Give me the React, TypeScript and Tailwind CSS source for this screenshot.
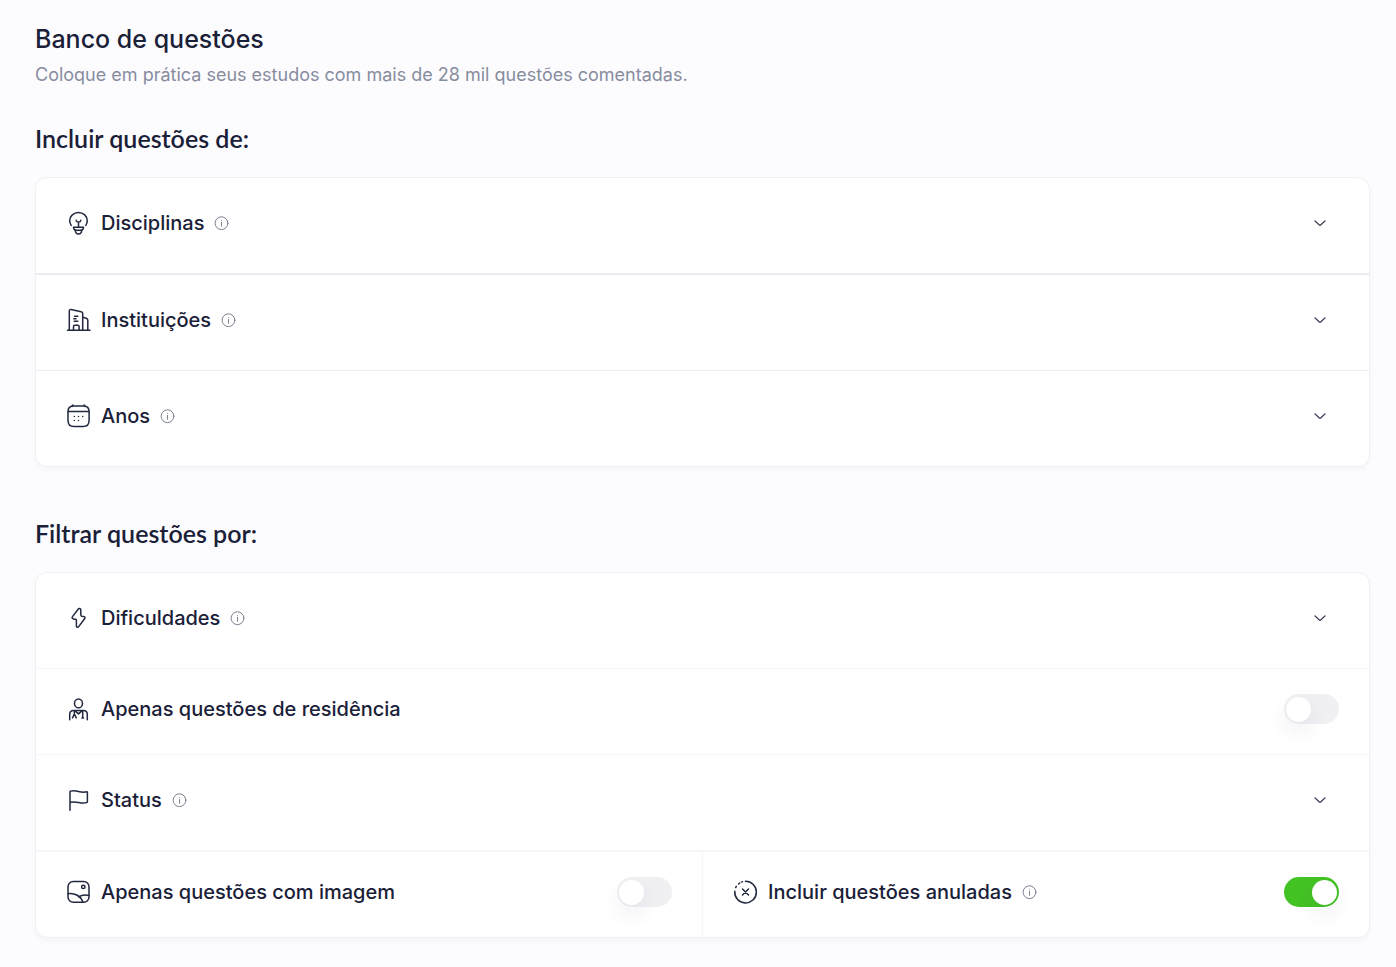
import React, { ReactNode, useState } from "react";
import clsx from "clsx";

const Icon = ({ children }: { children: ReactNode }) => (
  <svg
    viewBox="0 0 25 25"
    className="size-[25px] shrink-0 text-[#22283f]"
    fill="none"
    stroke="currentColor"
    strokeWidth={1.5}
    strokeLinecap="round"
    strokeLinejoin="round"
    aria-hidden="true"
  >
    {children}
  </svg>
);

const BulbIcon = () => (
  <Icon>
    <path d="M5.2 14.4A8.9 8.9 0 0 1 3.7 9.700a8.800 8.200 0 0 1 17.600 0 8.900 8.900 0 0 1-1.500 4.700" />
    <path d="M10.200 9.300c.2 1.200 1.100 1.800 2.300 1.800s2.100-.6 2.300-1.800M12.500 11.200v4.800" />
    <path d="M7.500 16.300h10c-.2 1.900-1.100 2.900-2.700 2.900h-4.600c-1.600 0-2.500-1-2.700-2.900Z" />
    <path d="M9.300 19.200c.1 2.400 1.300 3.700 3.200 3.700s3.100-1.300 3.200-3.700" />
  </Icon>
);

const BuildingIcon = () => (
  <Icon>
    <path d="M1.500 22.300h22.500M3.300 22.100V3c0-1.100.7-1.700 1.800-1.500l10 2.300c1 .2 1.600.8 1.600 1.800v16.500" />
    <path d="M16.700 9.200l3.500 1c1.100.3 1.600.9 1.600 2v9.900" />
    <path d="M7.500 22.100v-3.500c0-.9.500-1.400 1.400-1.400h2.800c.9 0 1.400.5 1.400 1.400v3.500" />
    <path d="M8.600 8.200h3.200M8.200 13.200h3.600M7.800 10.700h2.200" />
  </Icon>
);

const CalendarIcon = () => (
  <Icon>
    <path d="M7.600 2.100h9.800c3.700 0 5.700 2 5.700 5.700v8.600c0 4-2 6-6 6H8c-4 0-6-2-6-6V7.800c0-3.700 1.900-5.700 5.600-5.700Z" />
    <path d="M2.200 7.500h20.600M6.900 1c-.7.200-.9.700-.9 1.500M18.100 1c.7.200.9.700.9 1.500" />
    <path d="M8.300 12.600h.01M12.500 12.600h.01M16.700 12.600h.01M8.300 16.600h.01M12.500 16.600h.01" />
  </Icon>
);

const BoltIcon = () => (
  <Icon>
    <path d="M12.100 3.200 6.500 10.600c-.8 1.100-.4 2.100.9 2.300l2.100.3c.6.100.9.500.9 1.100v5.600c0 1.400 1.500 1.800 2.300.7l5.900-7.900c.8-1.100.4-2-.9-2.200l-1.900-.2c-.7-.1-1-.5-1-1.200V3.800c0-1.300-1.800-1.800-2.700-.6Z" />
  </Icon>
);

const DoctorIcon = () => (
  <Icon>
    <ellipse cx="12.500" cy="6.400" rx="4" ry="4.400" />
    <path d="M3.700 22.800v-5.500c0-2.600 1.300-3.900 3.900-3.900h9.800c2.600 0 3.900 1.300 3.900 3.900v5.500" />
    <path d="M8.400 13.700v3.300M6.500 20.900l1.900-3.900 1.900 3.900M9.200 13.900l3.300 3 3.300-3M16.700 13.700v6.600M15.900 20.900h1.600" />
  </Icon>
);

const FlagIcon = () => (
  <Icon>
    <path d="M4 22.300V4c0-.5.200-.8.700-.9 5.800-1.800 8.700 1.900 14.300 1 .7-.1 1.300-.3 1.600-.4.500-.1.800.2.800.7v9c0 .6-.2 1-.8 1.200-5.800 1.900-10-2.100-16.500-.3" />
  </Icon>
);

const ImageIcon = () => (
  <Icon>
    <rect x="2" y="1.500" width="21" height="20.800" rx="5.300" />
    <circle cx="17.300" cy="6.900" r="1.700" />
    <path d="M2.200 13.700c6.300-.8 12.800 2.200 14.600 8.300M12.600 16.900c3-1.900 6.600-2.400 10.200-1.500" />
  </Icon>
);

const CancelIcon = () => (
  <Icon>
    <path d="M12.500 1.300a10.800 10.800 0 1 1-10.700 9.900" />
    <path d="M2.700 7.500l.6-1.200M5.500 4l1.300-1M8.900 1.900l.6-.2M9.500 9l6 6M15.500 9l-6 6" />
  </Icon>
);

const InfoIcon = () => (
  <svg
    viewBox="0 0 15 15"
    className="size-[15px] shrink-0 text-[#6d7284]"
    fill="none"
    stroke="currentColor"
    strokeWidth={0.9}
    strokeLinecap="round"
    aria-hidden="true"
  >
    <circle cx="7.500" cy="7.200" r="6.400" />
    <path d="M7.500 6.300v4M7.500 4.400h.01" />
  </svg>
);

const Chevron = ({ open }: { open: boolean }) => (
  <svg
    viewBox="0 0 20 20"
    className={clsx("mr-[9px] size-5 shrink-0 text-[#2b3148]", open && "rotate-180")}
    fill="none"
    stroke="currentColor"
    strokeWidth={1.3}
    strokeLinecap="round"
    strokeLinejoin="round"
    aria-hidden="true"
  >
    <path d="M5 7.900l4.200 4c.5.500 1.100.5 1.600 0l4.200-4" />
  </svg>
);

interface RowProps {
  icon: ReactNode;
  title: string;
  info?: boolean;
}

const RowTitle = ({ icon, title, info }: RowProps) => (
  <span className="flex items-center gap-[10px]">
    {icon}
    <span className="text-xl leading-[30px] font-medium">{title}</span>
    {info && <InfoIcon />}
  </span>
);

const AccordionRow = ({ icon, title }: RowProps) => {
  const [open, setOpen] = useState(false);

  return (
    <button
      type="button"
      aria-expanded={open}
      onClick={() => setOpen(!open)}
      className="flex w-full cursor-pointer items-center justify-between px-[30px] pt-[30px] pb-[35px] text-left"
    >
      <RowTitle icon={icon} title={title} info />
      <Chevron open={open} />
    </button>
  );
};

const SwitchRow = ({
  icon,
  title,
  info,
  defaultChecked = false,
}: RowProps & { defaultChecked?: boolean }) => {
  const [checked, setChecked] = useState(defaultChecked);

  return (
    <label className="flex flex-1 cursor-pointer items-center justify-between px-[30px] pt-[25px] pb-[30px]">
      <RowTitle icon={icon} title={title} info={info} />
      <input
        type="checkbox"
        role="switch"
        checked={checked}
        onChange={(e) => setChecked(e.target.checked)}
        className="flex h-[30px] w-[55px] shrink-0 cursor-pointer appearance-none items-center rounded-full bg-[#f0f0f3] px-[2px] before:size-[25px] before:rounded-full before:bg-white before:shadow-[0_10px_20px_rgba(50,54,120,0.08)] before:content-[''] checked:justify-end checked:bg-[#43c224]"
      />
    </label>
  );
};

const Section = ({ title, children }: { title: string; children: ReactNode }) => (
  <section>
    <h2 className="font-['Lato',sans-serif] text-[25px] leading-[30px] font-semibold">
      {title}
    </h2>
    <div className="mt-6 rounded-xl border border-[#f0f0f4] bg-white shadow-[0_3px_6px_rgba(30,34,60,0.03)]">
      {children}
    </div>
  </section>
);

export default function App() {
  return (
    <main className="min-h-screen bg-[#fcfcfe] pt-6 pr-[26px] pb-[29px] pl-[35px] font-['Inter',sans-serif] text-[#1a2038]">
      <header>
        <h1 className="text-[25px] leading-[30px] font-medium">Banco de questões</h1>
        <p className="mt-[6px] text-lg leading-[30px] text-[#878c9e]">
          Coloque em prática seus estudos com mais de 28 mil questões comentadas.
        </p>
      </header>

      <div className="mt-[33px] flex flex-col gap-[51px]">
        <Section title="Incluir questões de:">
          <AccordionRow icon={<BulbIcon />} title="Disciplinas" />
          <div className="border-t-2 border-[#ebebf2]">
            <AccordionRow icon={<BuildingIcon />} title="Instituições" />
          </div>
          <div className="border-t border-[#ebebf2]">
            <AccordionRow icon={<CalendarIcon />} title="Anos" />
          </div>
        </Section>

        <Section title="Filtrar questões por:">
          <AccordionRow icon={<BoltIcon />} title="Dificuldades" />
          <div className="border-t border-[#f6f6f8]">
            <SwitchRow icon={<DoctorIcon />} title="Apenas questões de residência" />
          </div>
          <div className="border-t border-[#f6f6f8]">
            <AccordionRow icon={<FlagIcon />} title="Status" />
          </div>
          <div className="flex divide-x divide-[#f6f6f8] border-t-2 border-[#f6f6f8]">
            <SwitchRow icon={<ImageIcon />} title="Apenas questões com imagem" />
            <SwitchRow
              icon={<CancelIcon />}
              title="Incluir questões anuladas"
              info
              defaultChecked
            />
          </div>
        </Section>
      </div>
    </main>
  );
}
